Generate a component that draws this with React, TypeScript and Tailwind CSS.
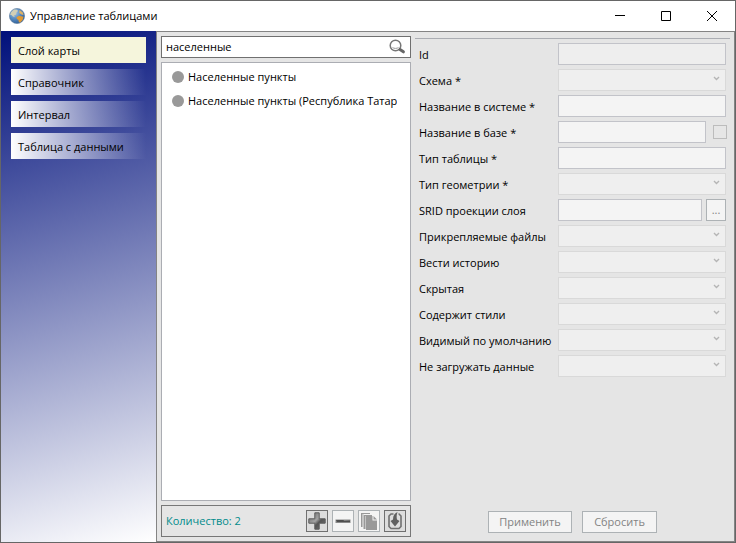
import { useState } from "react";

type Field = {
  id: string;
  label: string;
  kind: "text" | "select";
  readOnly?: boolean;
  extra?: "check" | "browse";
};

const tabs = ["Слой карты", "Справочник", "Интервал", "Таблица с данными"];

const tables = ["Населенные пункты", "Населенные пункты (Республика Татар"];

const fields: Field[] = [
  { id: "id", label: "Id", kind: "text", readOnly: true },
  { id: "scheme", label: "Схема *", kind: "select" },
  { id: "title", label: "Название в системе *", kind: "text" },
  { id: "dbname", label: "Название в базе *", kind: "text", extra: "check" },
  { id: "type", label: "Тип таблицы *", kind: "text" },
  { id: "geometry", label: "Тип геометрии *", kind: "select" },
  { id: "srid", label: "SRID проекции слоя", kind: "text", extra: "browse" },
  { id: "files", label: "Прикрепляемые файлы", kind: "select" },
  { id: "history", label: "Вести историю", kind: "select" },
  { id: "hidden", label: "Скрытая", kind: "select" },
  { id: "styles", label: "Содержит стили", kind: "select" },
  { id: "visible", label: "Видимый по умолчанию", kind: "select" },
  { id: "noload", label: "Не загружать данные", kind: "select" },
];

function GlobeIcon() {
  return (
    <svg width="16" height="16" viewBox="0 0 16 16" aria-hidden="true">
      <defs>
        <radialGradient id="sea" cx="35%" cy="30%" r="75%">
          <stop offset="0" stopColor="#a9c9e8" />
          <stop offset="0.5" stopColor="#5a8cc0" />
          <stop offset="1" stopColor="#2f5f98" />
        </radialGradient>
      </defs>
      <circle cx="8" cy="8" r="7.6" fill="url(#sea)" stroke="#5d7b9c" strokeWidth="0.6" />
      <path d="M2 4.500 5 1.500l3 .3 1 1.200-1.500 1.500-.5 2-2 1 .8 1.500L4 8.500 2.500 7 1.200 7z" fill="#d3cfb4" />
      <path d="M7.500 9.200 10 7.800l4.500 1-.8 3-2.200 2.400-1.500.3-.6-2.500-1.600-1.200z" fill="#e09a35" />
      <path d="M10.500 2 13.800 4.500l.8 2.500-2-.4L10.200 5z" fill="#e0b366" />
    </svg>
  );
}

function SearchIcon() {
  return (
    <svg width="18" height="16" viewBox="0 0 18 16" fill="none" aria-hidden="true">
      <circle cx="7.5" cy="6.5" r="5.3" stroke="#777" strokeWidth="1.5" />
      <path d="M4.500 8.500c1.500 1.200 4.500 1.200 6 0" stroke="#999" />
      <path d="m12 10.500 3.400 2.300" stroke="#666" strokeWidth="3" strokeLinecap="round" />
    </svg>
  );
}

function PlusIcon() {
  return (
    <svg width="18" height="18" viewBox="0 0 18 18" aria-hidden="true">
      <defs>
        <linearGradient id="steel" x1="0" y1="0" x2="1" y2="1">
          <stop offset="0" stopColor="#666" />
          <stop offset="0.45" stopColor="#a3a3a3" />
          <stop offset="0.6" stopColor="#555" />
          <stop offset="1" stopColor="#777" />
        </linearGradient>
      </defs>
      <path d="M6.800.8h4.400v6h6v4.400h-6v6H6.800v-6h-6V6.800h6z" fill="url(#steel)" stroke="#5c5c5c" />
    </svg>
  );
}

function MinusIcon() {
  return (
    <svg width="18" height="18" viewBox="0 0 18 18" aria-hidden="true">
      <path d="M1.500 7.500h15v3.500h-15z" fill="#8a8a8a" />
      <path d="M2 8h8l-1 2H3zM9 9l7-.5V10H9z" fill="#4f4f4f" />
    </svg>
  );
}

function CopyIcon() {
  return (
    <svg width="18" height="18" viewBox="0 0 18 18" fill="#999" aria-hidden="true">
      <path d="M1 1h9v1H2.500v13H1z" />
      <path d="M3.500 3H12v1H5v13H3.500z" />
      <path d="M2.500 2h1v13h-1zM5 4h1v13H5z" fill="#c4c4c4" />
      <path d="M6 4h6.500v4.500H17V18H6z" />
      <path d="m13.500 4 3.500 3.500h-3.500z" />
    </svg>
  );
}

function ImportIcon() {
  return (
    <svg width="18" height="18" viewBox="0 0 18 18" fill="none" aria-hidden="true">
      <path d="M7.500 2H5L3 4v10.500l2 2h8l2-2V4l-2-2h-.5" stroke="#707070" strokeWidth="1.600" />
      <path d="M11.500 0C8.500 1.500 7 3.500 7 7.500L4.500 9 9 14.500 13.500 9 11 7.500c-.6-2.500-.4-5 .5-7.500z" fill="#606060" />
    </svg>
  );
}

const tools = [
  { name: "Добавить", icon: <PlusIcon />, enabled: true },
  { name: "Удалить", icon: <MinusIcon />, enabled: false },
  { name: "Копировать", icon: <CopyIcon />, enabled: false },
  { name: "Импорт", icon: <ImportIcon />, enabled: true },
];

function TitleBar() {
  return (
    <header className="flex h-[30px] items-center bg-white pl-2">
      <GlobeIcon />
      <h1 className="ml-[5px] flex-1">Управление таблицами</h1>
      <button aria-label="Свернуть" className="flex h-full w-[46px] items-center justify-center">
        <svg width="10" height="10" viewBox="0 0 10 10" stroke="#000">
          <path d="M0 4.500h10" />
        </svg>
      </button>
      <button aria-label="Развернуть" className="flex h-full w-[46px] items-center justify-center">
        <svg width="10" height="10" viewBox="0 0 10 10" fill="none" stroke="#000">
          <path d="M.5.5h9v9h-9z" />
        </svg>
      </button>
      <button aria-label="Закрыть" className="flex h-full w-[46px] items-center justify-center">
        <svg width="10" height="10" viewBox="0 0 10 10" stroke="#000">
          <path d="m0 0 10 10M10 0 0 10" />
        </svg>
      </button>
    </header>
  );
}

function FieldRow({ field }: { field: Field }) {
  return (
    <div className="flex h-[22px] items-center">
      <label htmlFor={field.id} className="w-[139px] shrink-0 whitespace-nowrap pt-px">
        {field.label}
      </label>
      {field.kind === "select" ? (
        <div className="relative h-full min-w-0 flex-1">
          <select id={field.id} disabled className="block h-full w-full appearance-none border border-[#d9d9d9] bg-[#efefef] opacity-100" />
          <svg className="pointer-events-none absolute right-[6px] top-[7px]" width="7" height="6" viewBox="0 0 7 6" fill="none" stroke="#b5b5b5" strokeWidth="1.4">
            <path d="m1 1 2.500 2.500L6 1" />
          </svg>
        </div>
      ) : (
        <input
          id={field.id}
          disabled
          className={`h-full min-w-0 flex-1 border border-[#c2c3c9] ${field.readOnly ? "bg-[#eee]" : "bg-[#f4f4f4]"}`}
        />
      )}
      {field.extra === "check" && (
        <input
          type="checkbox"
          aria-label="Название в базе вручную"
          disabled
          className="-mr-px ml-[7px] size-[14px] appearance-none border border-[#bcbcbc] bg-[#e6e6e6]"
        />
      )}
      {field.extra === "browse" && (
        <button disabled className="ml-1 h-full w-5 border border-[#adb2b5] bg-[#f4f4f4] text-[#838383]">
          ...
        </button>
      )}
    </div>
  );
}

export default function App() {
  const [active, setActive] = useState(0);
  const [query, setQuery] = useState("населенные");
  const found = tables.filter((t) => t.toLowerCase().includes(query.toLowerCase()));

  return (
    <div className="flex min-h-screen flex-col border border-[#666] bg-[#e5e5e5] font-['Open_Sans',sans-serif] text-[11px] leading-4 text-black">
      <TitleBar />
      <div className="flex flex-1">
        <nav className="flex w-[155px] shrink-0 flex-col gap-[6px] bg-linear-[163deg,#00107b,#ffffff] px-[10px] pt-[6px]">
          {tabs.map((tab, index) => (
            <button
              key={tab}
              onClick={() => setActive(index)}
              className={`h-[26px] pl-[7px] pt-px text-left ${
                active === index ? "bg-[#f5f5dc]" : "bg-linear-to-r from-white to-white/0"
              }`}
            >
              {tab}
            </button>
          ))}
        </nav>
        <main className="flex min-w-0 flex-1 border border-[#848484] p-1">
          <section className="flex w-[250px] shrink-0 flex-col gap-1">
            <div className="flex h-[22px] items-center border border-[#707070] bg-white pl-1 pr-1">
              <input
                aria-label="Поиск"
                value={query}
                onChange={(e) => setQuery(e.target.value)}
                className="min-w-0 flex-1 outline-none"
              />
              <SearchIcon />
            </div>
            <ul className="flex-1 border border-[#abadb3] bg-white pl-[10px] pr-2 pt-[2px]">
              {found.map((name) => (
                <li key={name} className="flex h-6 items-center gap-1">
                  <span className="size-3 shrink-0 rounded-full bg-[#999]" />
                  <span className="overflow-hidden whitespace-nowrap">{name}</span>
                </li>
              ))}
            </ul>
            <div className="flex h-8 items-center border border-[#777] px-1">
              <span className="flex-1 text-[#008b8b]">Количество: {found.length}</span>
              <div className="flex gap-1">
                {tools.map((tool) => (
                  <button
                    key={tool.name}
                    aria-label={tool.name}
                    disabled={!tool.enabled}
                    className={`flex size-[22px] items-center justify-center border ${
                      tool.enabled ? "border-[#707070] bg-[#ddd]" : "border-[#adb2b5] bg-[#f4f4f4]"
                    }`}
                  >
                    {tool.icon}
                  </button>
                ))}
              </div>
            </div>
          </section>
          <section className="ml-1 flex min-w-0 flex-1 flex-col pt-[2px]">
            <form className="flex flex-1 flex-col gap-1 border-t border-[#abadb3] px-1 pt-1">
              {fields.map((field) => (
                <FieldRow key={field.id} field={field} />
              ))}
            </form>
            <div className="flex justify-center gap-[10px] pb-1">
              <button disabled className="h-[22px] w-[84px] border border-[#adb2b5] bg-[#f4f4f4] text-[#838383]">
                Применить
              </button>
              <button disabled className="h-[22px] w-[75px] border border-[#adb2b5] bg-[#f4f4f4] text-[#838383]">
                Сбросить
              </button>
            </div>
          </section>
        </main>
      </div>
    </div>
  );
}
